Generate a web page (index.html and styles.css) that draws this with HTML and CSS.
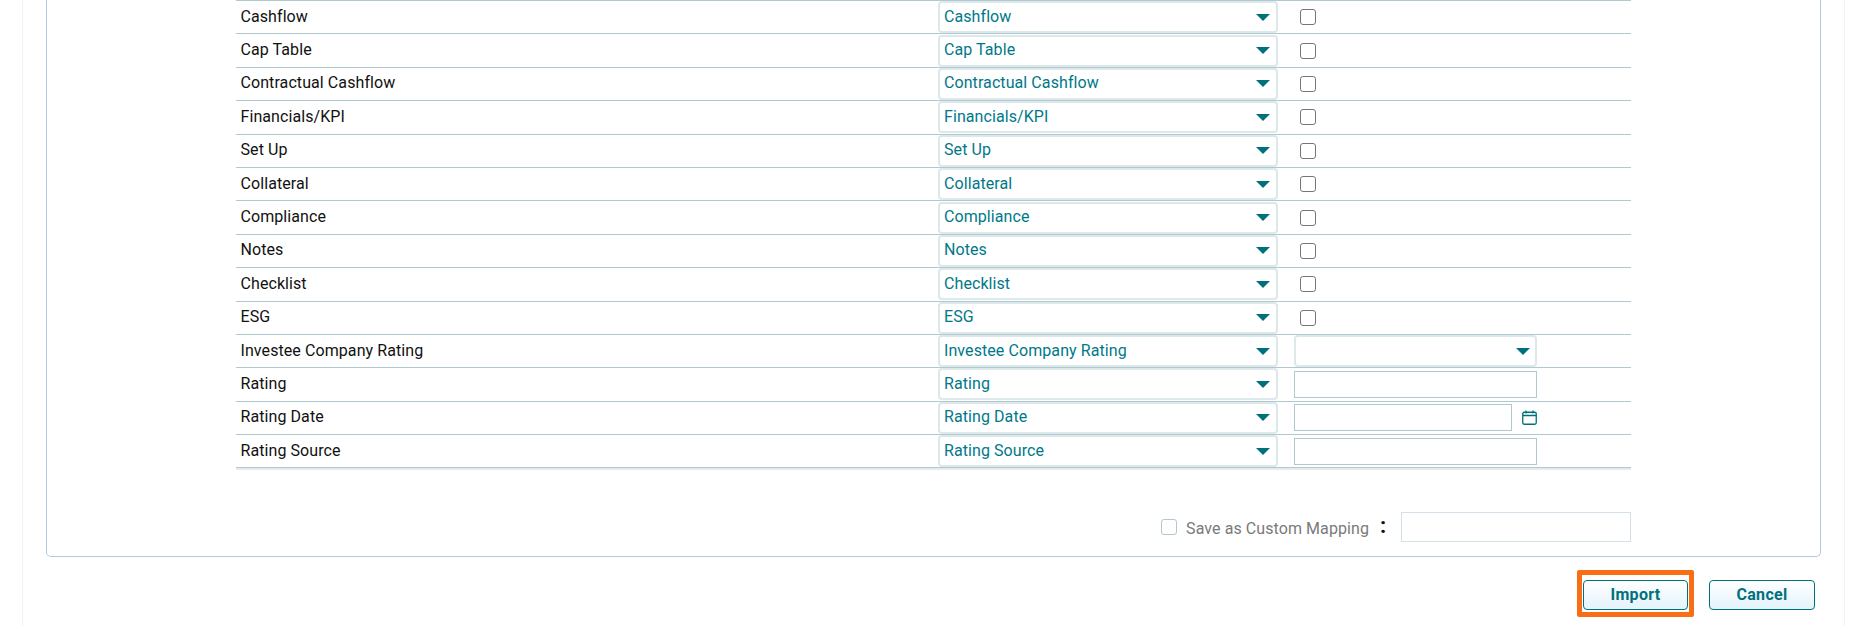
FILE: index.html
```html
<!DOCTYPE html>
<html lang="en">
<head>
<meta charset="utf-8">
<title>Import mapping</title>
<link rel="stylesheet" href="styles.css">
</head>
<body>
<svg class="defs" width="0" height="0" aria-hidden="true">
  <symbol id="arrow" viewBox="0 0 14 7"><path d="M0 0H14L7 7Z"/></symbol>
</svg>
<main class="shell">
  <section class="panel">
    <div class="table">
      <div class="row"><div class="label">Cashflow</div><div class="select"><span>Cashflow</span><svg class="arrow"><use href="#arrow"/></svg></div><div class="extra"><span class="check"></span></div></div>
      <div class="row"><div class="label">Cap Table</div><div class="select"><span>Cap Table</span><svg class="arrow"><use href="#arrow"/></svg></div><div class="extra"><span class="check"></span></div></div>
      <div class="row"><div class="label">Contractual Cashflow</div><div class="select"><span>Contractual Cashflow</span><svg class="arrow"><use href="#arrow"/></svg></div><div class="extra"><span class="check"></span></div></div>
      <div class="row"><div class="label">Financials/KPI</div><div class="select"><span>Financials/KPI</span><svg class="arrow"><use href="#arrow"/></svg></div><div class="extra"><span class="check"></span></div></div>
      <div class="row"><div class="label">Set Up</div><div class="select"><span>Set Up</span><svg class="arrow"><use href="#arrow"/></svg></div><div class="extra"><span class="check"></span></div></div>
      <div class="row"><div class="label">Collateral</div><div class="select"><span>Collateral</span><svg class="arrow"><use href="#arrow"/></svg></div><div class="extra"><span class="check"></span></div></div>
      <div class="row"><div class="label">Compliance</div><div class="select"><span>Compliance</span><svg class="arrow"><use href="#arrow"/></svg></div><div class="extra"><span class="check"></span></div></div>
      <div class="row"><div class="label">Notes</div><div class="select"><span>Notes</span><svg class="arrow"><use href="#arrow"/></svg></div><div class="extra"><span class="check"></span></div></div>
      <div class="row"><div class="label">Checklist</div><div class="select"><span>Checklist</span><svg class="arrow"><use href="#arrow"/></svg></div><div class="extra"><span class="check"></span></div></div>
      <div class="row"><div class="label">ESG</div><div class="select"><span>ESG</span><svg class="arrow"><use href="#arrow"/></svg></div><div class="extra"><span class="check"></span></div></div>
      <div class="row"><div class="label">Investee Company Rating</div><div class="select"><span>Investee Company Rating</span><svg class="arrow"><use href="#arrow"/></svg></div><div class="extra"><div class="select select-value"><span></span><svg class="arrow"><use href="#arrow"/></svg></div></div></div>
      <div class="row"><div class="label">Rating</div><div class="select"><span>Rating</span><svg class="arrow"><use href="#arrow"/></svg></div><div class="extra"><div class="input"></div></div></div>
      <div class="row"><div class="label">Rating Date</div><div class="select"><span>Rating Date</span><svg class="arrow"><use href="#arrow"/></svg></div><div class="extra date"><div class="input"></div>
        <svg class="calendar" viewBox="0 0 15 15" fill="none" stroke="currentColor"><rect x="0.75" y="2.25" width="13.5" height="12" rx="1.5" stroke-width="1.3"/><path d="M0.75 5.5H14.25M4 0.5V3.5M11 0.5V3.5" stroke-width="1.3"/></svg>
      </div></div>
      <div class="row"><div class="label">Rating Source</div><div class="select"><span>Rating Source</span><svg class="arrow"><use href="#arrow"/></svg></div><div class="extra"><div class="input"></div></div></div>
    </div>
    <div class="save-row">
      <span class="check check-muted"></span>
      <span class="save-label">Save as Custom Mapping</span>
      <span class="colon">:</span>
      <div class="save-input"></div>
    </div>
  </section>
  <footer class="actions">
    <div class="highlight"><button class="btn" type="button">Import</button></div>
    <button class="btn" type="button">Cancel</button>
  </footer>
</main>
</body>
</html>
```
FILE: styles.css
```css
* { box-sizing: border-box; }
html, body { margin: 0; height: 626px; overflow: hidden; background: #fff; }
body { font-family: Roboto, "Liberation Sans", sans-serif; font-size: 16px; letter-spacing: .08px; color: #111; }
.defs { position: absolute; }

.shell {
  width: 1823px;
  height: 626px;
  margin-left: 22px;
  padding: 0 24px 0 23px;
  border-left: 1px solid #f3f3f3;
  border-right: 1px solid #f3f3f3;
}

.panel {
  width: 1775px;
  height: 557px;
  padding: 0 189px 0 189px;
  border: 1px solid #b0c8e4;
  border-top: 0;
  border-radius: 0 0 5px 5px;
}

.table {
  border-bottom: 1px solid #b0c8d0;
  box-shadow: 0 2px 0 #e6ecee;
}

.row {
  display: grid;
  grid-template-columns: 702px 340px 1fr;
  align-items: center;
  height: 33.4px;
  border-top: 1px solid #b0c8d0;
}

.label { padding-left: 4.5px; line-height: 20px; padding-bottom: 1px; }

.select {
  display: flex;
  align-items: center;
  justify-content: space-between;
  height: 32px;
  padding: 0 6px 0 4px;
  border: 2px solid #dde8ea;
  border-radius: 4px;
  color: #00788a;
  background: #fff;
}
.select span { padding-bottom: 2px; }

.arrow { width: 14px; height: 7px; fill: #00717c; }

.extra { display: flex; align-items: center; padding-left: 16px; }
.extra .check { margin-left: 6px; }
.date { gap: 10px; }

.check {
  display: block;
  flex: none;
  width: 16px;
  height: 16px;
  border: 1.5px solid #767676;
  border-radius: 3px;
  background: #fff;
}
.check-muted { border: 1px solid #b0c8d0; }

.select-value { width: 243px; padding-right: 5px; }

.input {
  width: 243px;
  height: 27px;
  border: 1px solid #b0c8d0;
  background: #fff;
}
.date .input { width: 218px; }

.calendar { width: 15px; height: 15px; flex: none; color: #00717c; }

.save-row {
  display: flex;
  align-items: center;
  justify-content: flex-end;
  margin-top: 44px;
}
.save-label { margin-left: 9px; color: #7a7a7a; padding-top: 2px; }
.colon { width: 32px; padding: 0 0 3px 11px; color: #111; font-size: 22px; line-height: 24px; font-weight: 700; }
.save-input { width: 230px; height: 30px; border: 1px solid #d5e1e8; }

.actions {
  display: flex;
  justify-content: flex-end;
  align-items: flex-start;
  gap: 15px;
  margin-top: 13px;
  padding-right: 5px;
}

.highlight {
  padding: 5px 1px 2px;
  border: 5px solid #f96d14;
  border-radius: 2px;
}

.btn {
  display: block;
  width: 105px;
  height: 30px;
  margin-top: 0;
  padding: 0 0 2px;
  border: 1px solid #00717c;
  border-radius: 4px;
  background: linear-gradient(#ffffff, #e4f3fb);
  color: #00717c;
  font: 700 16px Roboto, "Liberation Sans", sans-serif;
  letter-spacing: .3px;
}
.actions > .btn { width: 106px; margin-top: 10px; }
```
